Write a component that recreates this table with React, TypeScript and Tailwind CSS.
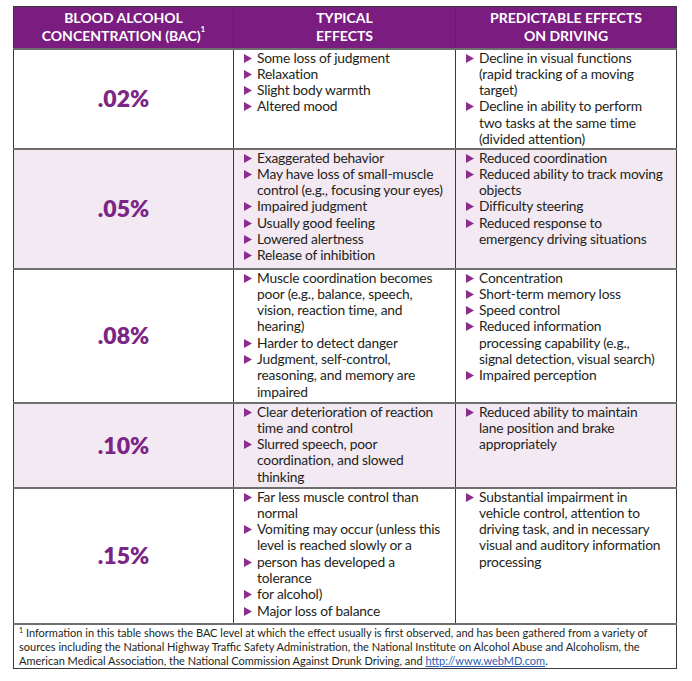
import React from "react";

// each bullet is a list of lines, broken where the printed table breaks them
const rows = [
  {
    bac: ".02%",
    h: "h-[100px]",
    shade: false,
    typical: [["Some loss of judgment"], ["Relaxation"], ["Slight body warmth"], ["Altered mood"]],
    driving: [
      ["Decline in visual functions", "(rapid tracking of a moving", "target)"],
      ["Decline in ability to perform", "two tasks at the same time", "(divided attention)"],
    ],
  },
  {
    bac: ".05%",
    h: "h-[120px]",
    shade: true,
    typical: [
      ["Exaggerated behavior"],
      ["May have loss of small-muscle", "control (e.g., focusing your eyes)"],
      ["Impaired judgment"],
      ["Usually good feeling"],
      ["Lowered alertness"],
      ["Release of inhibition"],
    ],
    driving: [
      ["Reduced coordination"],
      ["Reduced ability to track moving", "objects"],
      ["Difficulty steering"],
      ["Reduced response to", "emergency driving situations"],
    ],
  },
  {
    bac: ".08%",
    h: "h-[134px]",
    shade: false,
    typical: [
      ["Muscle coordination becomes", "poor (e.g., balance, speech,", "vision, reaction time, and", "hearing)"],
      ["Harder to detect danger"],
      ["Judgment, self-control,", "reasoning, and memory are", "impaired"],
    ],
    driving: [
      ["Concentration"],
      ["Short-term memory loss"],
      ["Speed control"],
      ["Reduced information", "processing capability (e.g.,", "signal detection, visual search)"],
      ["Impaired perception"],
    ],
  },
  {
    bac: ".10%",
    h: "h-[85px]",
    shade: true,
    typical: [
      ["Clear deterioration of reaction", "time and control"],
      ["Slurred speech, poor", "coordination, and slowed", "thinking"],
    ],
    driving: [["Reduced ability to maintain", "lane position and brake", "appropriately"]],
  },
  {
    bac: ".15%",
    h: "h-[136px]",
    shade: false,
    typical: [
      ["Far less muscle control than", "normal"],
      ["Vomiting may occur (unless this", "level is reached slowly or a"],
      ["person has developed a", "tolerance"],
      ["for alcohol)"],
      ["Major loss of balance"],
    ],
    driving: [
      [
        "Substantial impairment in",
        "vehicle control, attention to",
        "driving task, and in necessary",
        "visual and auditory information",
        "processing",
      ],
    ],
  },
];

function Bullets({ items }: { items: string[][] }) {
  return (
    <ul className="flex flex-col">
      {items.map((lines) => (
        <li key={lines[0]} className="flex">
          <svg viewBox="0 0 8 9" className="w-[8px] h-[9px] shrink-0 mt-[4px] mr-[5px]">
            <polygon points="0,0 8,4.5 0,9" fill="#8b2c8f" />
          </svg>
          <span className="flex flex-col">
            {lines.map((l) => (
              <span key={l} className="whitespace-nowrap">{l}</span>
            ))}
          </span>
        </li>
      ))}
    </ul>
  );
}

export default function App() {
  return (
    <div className="w-[692px] h-[681px] bg-white pt-[6px] pl-[13px]" style={{ fontFamily: "Lato, 'Open Sans', sans-serif" }}>
      <table className="table-fixed border-collapse w-[663px] text-[13.8px] tracking-[-0.2px] leading-[16.3px] text-[#231f20]">
        <colgroup>
          <col className="w-[220px]" />
          <col className="w-[222px]" />
          <col className="w-[221px]" />
        </colgroup>
        <thead>
          <tr className="h-[42px] bg-[#7a1c80] text-white font-bold text-[14px] tracking-normal leading-[18px] text-center">
            <th className="border border-[#3a3a3a] px-2">
              BLOOD ALCOHOL
              <br />
              CONCENTRATION (BAC)<sup className="text-[8px] align-super">1</sup>
            </th>
            <th className="border border-[#3a3a3a] border-l-[#d8c3d9] px-2">
              TYPICAL
              <br />
              EFFECTS
            </th>
            <th className="border border-[#3a3a3a] border-l-[#d8c3d9] px-2">
              PREDICTABLE EFFECTS
              <br />
              ON DRIVING
            </th>
          </tr>
        </thead>
        <tbody>
          {rows.map((r) => (
            <tr key={r.bac} className={`${r.h} ${r.shade ? "bg-[#f3e9f3]" : "bg-white"}`}>
              <td className="border border-[#3a3a3a] border-t-2 border-t-[#6e6e6e] text-center align-middle text-[23px] tracking-normal font-extrabold text-[#7b2585]">
                {r.bac}
              </td>
              <td className="border border-[#3a3a3a] border-t-2 border-t-[#6e6e6e] align-top pl-[10px] pr-[2px] pt-0">
                <Bullets items={r.typical} />
              </td>
              <td className="border border-[#3a3a3a] border-t-2 border-t-[#6e6e6e] align-top pl-[10px] pr-[2px] pt-0">
                <Bullets items={r.driving} />
              </td>
            </tr>
          ))}
          <tr className="h-[45px]">
            <td colSpan={3} className="border border-[#3a3a3a] border-t-2 border-t-[#6e6e6e] pl-[5px] pr-[2px] pt-[1px] align-top text-[11px] tracking-normal leading-[14px]">
              <span className="block whitespace-nowrap">
                <sup className="text-[7px]">1</sup> Information in this table shows the BAC level at which the effect usually is first observed, and has been gathered from a variety of
              </span>
              <span className="block whitespace-nowrap">
                sources including the National Highway Traffic Safety Administration, the National Institute on Alcohol Abuse and Alcoholism, the
              </span>
              <span className="block whitespace-nowrap">
                American Medical Association, the National Commission Against Drunk Driving, and{" "}
                <span className="text-[#2a5db0] underline">http://www.webMD.com</span>.
              </span>
            </td>
          </tr>
        </tbody>
      </table>
    </div>
  );
}
